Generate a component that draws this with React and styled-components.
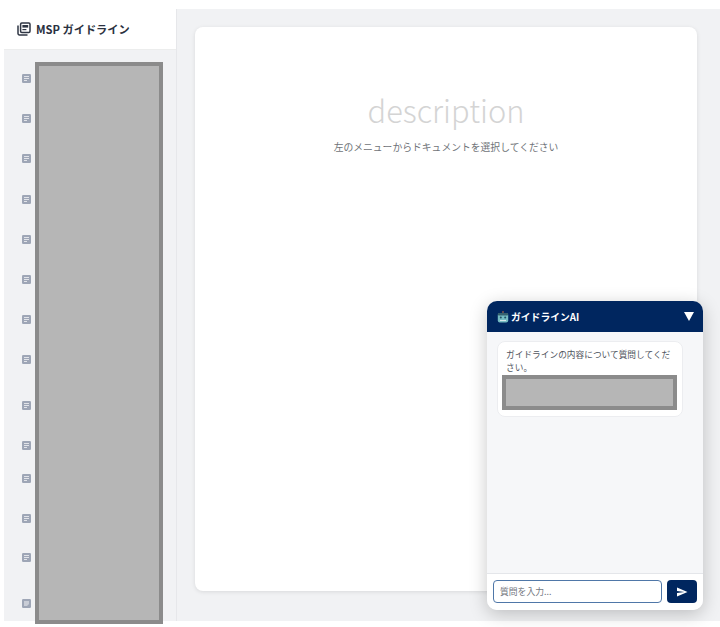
import React from 'react';
import styled, { createGlobalStyle } from 'styled-components';
import { MdSend } from 'react-icons/md';

const Global = createGlobalStyle`
  html, body {
    margin: 0;
    height: 100%;
    background: #fff;
    font-family: "Noto Sans CJK JP", "Noto Sans", sans-serif;
  }
`;

const Page = styled.div`
  width: 720px;
  height: 627px;
  box-sizing: border-box;
  padding: 9px 0 6px 4px;
  display: flex;
  overflow: hidden;
  position: relative;
`;

const Sidebar = styled.aside`
  width: 173px;
  flex: none;
  display: flex;
  flex-direction: column;
  border-right: 1px solid #e6e7ea;
  box-sizing: border-box;
`;

const SidebarHeader = styled.div`
  height: 41px;
  flex: none;
  display: flex;
  align-items: center;
  gap: 5px;
  padding-left: 13px;
  box-sizing: border-box;
  font-size: 11.2px;
  font-weight: 700;
  color: #2b3140;
  border-bottom: 1px solid #eceded;
  background: #fff;
`;

const DocList = styled.div`
  flex: 1;
  display: flex;
  padding-left: 15px;
  background: #f1f2f4;
  min-height: 0;
`;

const IconColumn = styled.div`
  width: 16px;
  padding-top: 24px;
  display: flex;
  flex-direction: column;
`;

const DocRow = styled.div`
  height: ${(p) => p.$h}px;
  flex: none;
  display: flex;
  align-items: flex-start;
  padding-left: 3px;
`;

const Redacted = styled.div`
  box-sizing: border-box;
  background: #b6b6b6;
  border: 4px solid #8b8b8b;
`;

const NamesBlock = styled(Redacted)`
  width: 128px;
  height: 562px;
  margin-top: 12px;
  flex: none;
`;

const Main = styled.main`
  flex: 1;
  background: #f1f2f4;
  padding: 18px 23px 30px 18px;
  display: flex;
`;

const Card = styled.section`
  flex: 1;
  background: #fff;
  border-radius: 8px;
  box-shadow: 0 1px 4px rgba(0, 0, 0, 0.1);
  display: flex;
  flex-direction: column;
  align-items: center;
  padding-top: 61px;
`;

const Ligature = styled.div`
  font-size: 30.8px;
  font-weight: 300;
  line-height: 44px;
  color: #d4d4d4;
`;

const Hint = styled.p`
  margin: 7px 0 0;
  font-size: 9.8px;
  line-height: 16px;
  color: #6f7378;
`;

const Chat = styled.div`
  position: absolute;
  left: 487px;
  top: 301px;
  width: 216px;
  height: 309px;
  border-radius: 10px;
  overflow: hidden;
  display: flex;
  flex-direction: column;
  background: #f6f7f9;
  box-shadow: 0 4px 18px rgba(0, 0, 0, 0.22);
`;

const ChatHeader = styled.header`
  height: 31px;
  flex: none;
  background: #00265f;
  color: #fff;
  display: flex;
  align-items: center;
  justify-content: space-between;
  padding: 0 9px 0 10px;
  font-size: 9.8px;
  font-weight: 700;
`;

const ChatTitle = styled.div`
  display: flex;
  align-items: center;
  gap: 2px;
`;

const ChatBody = styled.div`
  flex: 1;
  padding: 9px 20px 0 10px;
`;

const Bubble = styled.div`
  box-sizing: border-box;
  height: 76px;
  background: #fff;
  border: 1px solid #ecedf0;
  border-radius: 8px;
  padding: 6px 5px 0 4px;
  font-size: 8.7px;
  line-height: 13px;
  color: #50555e;
`;

const BubbleText = styled.div`
  padding: 0 0 0 4px;
`;

const BubbleBlock = styled(Redacted)`
  height: 35px;
  margin-top: 1px;
`;

const ChatFooter = styled.form`
  height: 37px;
  flex: none;
  box-sizing: border-box;
  border-top: 1px solid #e4e6ea;
  background: #fff;
  padding: 6px 6px 0;
  display: flex;
  gap: 5px;
  align-items: flex-start;
`;

const Input = styled.input`
  width: 169px;
  height: 23px;
  box-sizing: border-box;
  border: 1.5px solid #4f77a8;
  border-radius: 4px;
  outline: none;
  padding: 0 6px;
  font: 8.8px "Noto Sans CJK JP", sans-serif;
  caret-color: #222;
  &::placeholder { color: #74787f; }
`;

const Send = styled.button`
  width: 30px;
  height: 23px;
  padding: 0;
  border: 0;
  border-radius: 4px;
  background: #00265f;
  color: #fff;
  display: flex;
  align-items: center;
  justify-content: center;
  svg { font-size: 12px; }
`;

const BookIcon = () => (
  <svg width="14" height="14" viewBox="0 0 14 14" fill="none">
    <path d="M1 3.5V11.6A1.4 1.4 0 0 0 2.4 13H10.5" stroke="#2f3644" strokeWidth="1.5" />
    <rect x="3.6" y="1" width="9.4" height="9.4" rx="1.2" stroke="#2f3644" strokeWidth="1.5" />
    <rect x="5.4" y="3" width="5.8" height="2.6" fill="#2f3644" />
    <rect x="5.4" y="7" width="4" height="1.2" fill="#2f3644" />
  </svg>
);

// the list icons are only 9px in the picture, so they are drawn on the pixel grid
const DocIcon = () => (
  <svg width="9" height="9" viewBox="0 0 9 9">
    <rect width="9" height="9" rx="1.2" fill="#9ea6b6" />
    <rect x="2" y="2" width="5" height="1" fill="#e2e4e9" />
    <rect x="2" y="4" width="5" height="1" fill="#e2e4e9" />
    <rect x="2" y="6" width="3" height="1" fill="#e2e4e9" />
  </svg>
);

const NoteIcon = () => (
  <svg width="9" height="9" viewBox="0 0 9 9">
    <rect width="9" height="9" rx="1.2" fill="#9ea6b6" />
    <path d="M2 2h5v3L5 7H2z" fill="#c9cdd6" />
  </svg>
);

const RobotIcon = () => (
  <svg width="12" height="12" viewBox="0 0 12 12">
    <rect x="5.3" y="0" width="1.4" height="2.4" fill="#8a5a4a" />
    <rect x="0.8" y="2" width="10.4" height="9.4" rx="2" fill="#76bcc2" />
    <rect x="0.8" y="2" width="10.4" height="2.4" rx="1" fill="#35606e" />
    <circle cx="3.8" cy="6.6" r="1" fill="#1d4f63" />
    <circle cx="8.2" cy="6.6" r="1" fill="#1d4f63" />
    <rect x="3" y="9" width="6" height="1" fill="#d9e8ea" />
  </svg>
);

const rows = [40, 40, 41, 40, 40, 40, 40, 46, 40, 33, 40, 39, 46, 20];

export default function App() {
  return (
    <Page>
      <Global />
      <Sidebar>
        <SidebarHeader>
          <BookIcon />
          MSP ガイドライン
        </SidebarHeader>
        <DocList>
          <IconColumn>
            {rows.map((h, i) => (
              <DocRow key={i} $h={h}>
                {i === rows.length - 1 ? <NoteIcon /> : <DocIcon />}
              </DocRow>
            ))}
          </IconColumn>
          <NamesBlock />
        </DocList>
      </Sidebar>
      <Main>
        <Card>
          <Ligature>description</Ligature>
          <Hint>左のメニューからドキュメントを選択してください</Hint>
        </Card>
      </Main>
      <Chat>
        <ChatHeader>
          <ChatTitle>
            <RobotIcon />
            ガイドラインAI
          </ChatTitle>
          <svg width="10" height="9" viewBox="0 0 10 9">
            <path d="M0 0h10L5 9z" fill="#fff" />
          </svg>
        </ChatHeader>
        <ChatBody>
          <Bubble>
            <BubbleText>ガイドラインの内容について質問してください。</BubbleText>
            <BubbleBlock />
          </Bubble>
        </ChatBody>
        <ChatFooter onSubmit={(e) => e.preventDefault()}>
          <Input placeholder="質問を入力..." autoFocus />
          <Send type="submit" aria-label="送信">
            <MdSend />
          </Send>
        </ChatFooter>
      </Chat>
    </Page>
  );
}
